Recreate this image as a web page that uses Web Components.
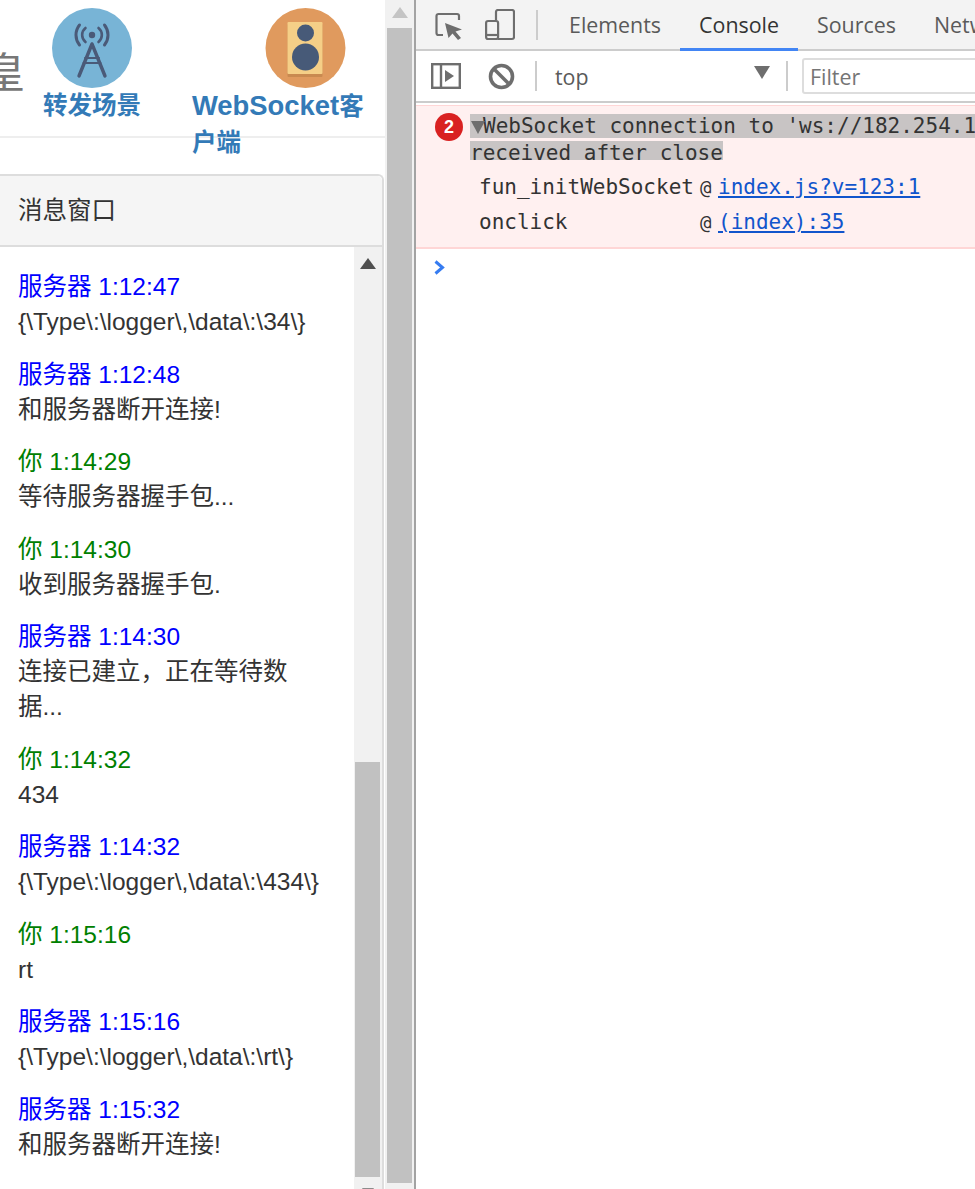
<!DOCTYPE html>
<html>
<head>
<meta charset="utf-8">
<title>WebSocket</title>
<style>
html,body{margin:0;height:1189px;overflow:hidden;background:#fff;}
body{font-family:"Liberation Sans","Noto Sans CJK SC",sans-serif;}
</style>
</head>
<body>
<app-root>
  <nav-bar slot="left">
    <nav-item label="转发场景" gap="9" width="98"><svg viewBox="0 0 80 80" width="80" height="80">
      <circle cx="40" cy="40" r="40" fill="#78b4d6"/>
      <g fill="none" stroke="#4a5a78" stroke-linecap="round">
        <g stroke-width="2.6"><path d="M33.5 20a9 9 0 0 0 0 14M46.500 20a9 9 0 0 1 0 14"/></g>
        <g stroke-width="3"><path d="M27.500 17a16 16 0 0 0 0 20M52.500 17a16 16 0 0 1 0 20"/></g>
        <path stroke-width="3.400" d="M40 36L27 68M40 36L53 68"/>
        <path stroke-width="2" d="M33 50H47M31.500 55H48.500"/>
      </g>
      <circle cx="40" cy="27" r="3.200" fill="#4a5a78"/>
    </svg></nav-item>
    <nav-item gap="73" width="178" strong="WebSocket" label="客户端"><svg viewBox="0 0 80 80" width="81" height="80">
      <circle cx="40" cy="40" r="40" fill="#e09a5e"/>
      <rect x="22" y="16" width="35" height="53" rx="1" fill="#c98a50"/>
      <rect x="22" y="14" width="35" height="52" rx="1" fill="#f5cf87"/>
      <circle cx="40" cy="25" r="8.500" fill="#475a78"/>
      <circle cx="40" cy="49" r="13.500" fill="#475a78"/>
    </svg></nav-item>
  </nav-bar>
  <msg-panel slot="left" heading="消息窗口">
    <chat-msg who="server" time="1:12:47">{\Type\:\logger\,\data\:\34\}</chat-msg>
    <chat-msg who="server" time="1:12:48">和服务器断开连接!</chat-msg>
    <chat-msg who="you" time="1:14:29">等待服务器握手包...</chat-msg>
    <chat-msg who="you" time="1:14:30">收到服务器握手包.</chat-msg>
    <chat-msg who="server" time="1:14:30">连接已建立，正在等待数据...</chat-msg>
    <chat-msg who="you" time="1:14:32">434</chat-msg>
    <chat-msg who="server" time="1:14:32">{\Type\:\logger\,\data\:\434\}</chat-msg>
    <chat-msg who="you" time="1:15:16">rt</chat-msg>
    <chat-msg who="server" time="1:15:16">{\Type\:\logger\,\data\:\rt\}</chat-msg>
    <chat-msg who="server" time="1:15:32">和服务器断开连接!</chat-msg>
  </msg-panel>
  <dev-tools slot="right"></dev-tools>
</app-root>

<script>
class AppRoot extends HTMLElement{
  constructor(){
    super();
    this.attachShadow({mode:'open'}).innerHTML=`
    <style>
      :host{display:flex;height:1189px;width:975px;overflow:hidden;}
      .left{width:385px;flex:none;display:flex;flex-direction:column;overflow:hidden;}
      .right{flex:1;min-width:0;border-left:2px solid #a3a3a3;}
    </style>
    <div class="left"><slot name="left"></slot></div>
    <scroll-bar top="28" bottom="1183" width="29" thumb="25" inset="2" arrow="#c4c4c4" arrowtop="7"></scroll-bar>
    <div class="right"><slot name="right"></slot></div>`;
  }
}
customElements.define('app-root',AppRoot);

class ScrollBar extends HTMLElement{
  connectedCallback(){
    const a=n=>this.getAttribute(n);
    const top=+a('top'),bottom=+a('bottom'),w=+a('width'),t=+a('thumb'),inset=+a('inset');
    const down=a('down');
    this.attachShadow({mode:'open'}).innerHTML=`
    <style>
      :host{display:block;flex:none;width:${w}px;background:#f1f1f1;position:relative;overflow:hidden;}
      .up{display:flex;justify-content:center;height:${top}px;padding-top:${a('arrowtop')}px;box-sizing:border-box;}
      .up i{width:0;height:0;border:8px solid transparent;border-top:0;border-bottom:11px solid ${a('arrow')};}
      .thumb{width:${t}px;height:${bottom-top}px;margin-left:${inset}px;background:#c1c1c1;}
      .down{position:absolute;left:${inset}px;width:${t}px;bottom:-9px;display:${down?'flex':'none'};justify-content:center;}
      .down i{width:0;height:0;border:6.500px solid transparent;border-bottom:0;border-top:10px solid #8c8c8c;}
    </style>
    <div class="up"><i></i></div>
    <div class="thumb"></div>
    <div class="down"><i></i></div>`;
  }
}
customElements.define('scroll-bar',ScrollBar);

class NavBar extends HTMLElement{
  constructor(){
    super();
    this.attachShadow({mode:'open'}).innerHTML=`
    <style>
      :host{display:block;flex:none;height:136px;border-bottom:2px solid #eee;}
      .row{display:flex;align-items:flex-start;height:136px;}
      .brand{flex:none;width:43px;margin-left:-17px;margin-right:17px;margin-top:49px;font-size:42px;line-height:50px;color:#777;white-space:nowrap;}
      ::slotted(nav-item:last-child){margin-left:51px;}
    </style>
    <div class="row"><span class="brand">皇</span><slot></slot></div>`;
  }
}
customElements.define('nav-bar',NavBar);

class NavItem extends HTMLElement{
  connectedCallback(){
    const a=n=>this.getAttribute(n);
    const strong=a('strong')?`<span class="en">${a('strong')}</span>`:'';
    this.attachShadow({mode:'open'}).innerHTML=`
    <style>
      :host{display:block;flex:none;width:${a('width')}px;padding-top:8px;}
      .pic{display:block;margin-left:${a('gap')}px;height:80px;filter:blur(.4px);}
      .txt{font-weight:bold;font-size:24.500px;line-height:36px;color:#337ab7;}
      .en{font-size:27.400px;}
    </style>
    <div class="pic"><slot></slot></div>
    <div class="txt">${strong}${a('label')}</div>`;
  }
}
customElements.define('nav-item',NavItem);

class MsgPanel extends HTMLElement{
  connectedCallback(){
    this.attachShadow({mode:'open'}).innerHTML=`
    <style>
      :host{display:flex;flex-direction:column;flex:1;min-height:0;margin:36px 1px 0 -10px;border:2px solid #ddd;border-bottom:0;border-radius:6px 6px 0 0;color:#333;}
      .head{flex:none;height:71px;box-sizing:border-box;padding-left:26px;background:#f5f5f5;border-bottom:2px solid #ddd;font-size:24.500px;line-height:69px;border-radius:5px 5px 0 0;}
      .body{flex:1;min-height:0;display:flex;}
      .list{flex:1;min-width:0;padding:22px 0 0 26px;overflow:hidden;}
    </style>
    <div class="head">${this.getAttribute('heading')}</div>
    <div class="body">
      <div class="list"><slot></slot></div>
      <scroll-bar top="515" bottom="930" width="28" thumb="25" inset="1" arrow="#505050" arrowtop="11" down="1"></scroll-bar>
    </div>`;
  }
}
customElements.define('msg-panel',MsgPanel);

class ChatMsg extends HTMLElement{
  connectedCallback(){
    const you=this.getAttribute('who')==='you';
    this.attachShadow({mode:'open'}).innerHTML=`
    <style>
      :host{display:block;width:285px;margin-bottom:17.500px;font-size:24.500px;line-height:35px;color:#333;}
      .who{color:${you?'#008000':'#0000ff'};}
    </style>
    <div class="who">${you?'你':'服务器'} ${this.getAttribute('time')}</div>
    <div><slot></slot></div>`;
  }
}
customElements.define('chat-msg',ChatMsg);

class DevTools extends HTMLElement{
  constructor(){
    super();
    this.attachShadow({mode:'open'}).innerHTML=`
    <style>
      :host{display:block;height:1189px;overflow:hidden;font-family:"Open Sans","Liberation Sans",sans-serif;background:#fff;}
      .bar{display:flex;align-items:center;white-space:nowrap;}
      svg{display:block;flex:none;}
      .tabs{height:49px;background:#f3f3f3;border-bottom:2px solid #ccc;}
      .sep{flex:none;width:2px;background:#ccc;}
      .tab{flex:none;padding:0 19px;height:51px;box-sizing:border-box;line-height:50px;font-size:21.400px;color:#5a5a5a;margin-bottom:-2px;}
      .tab.on{color:#333;border-bottom:3px solid #4285f4;}
      .tools{height:50px;border-bottom:2px solid #ccc;}
      .ctx{flex:none;width:231px;margin-left:18px;display:flex;align-items:center;justify-content:space-between;padding-right:16px;box-sizing:border-box;font-size:21.400px;color:#5a5a5a;}
      .ctx i{width:0;height:0;border:8px solid transparent;border-bottom:0;border-top:13px solid #6e6e6e;margin-top:-7px;}
      .filter{flex:none;width:200px;height:36px;margin-left:14px;box-sizing:border-box;border:2px solid #ddd;border-radius:3px;padding-left:6px;font-size:21.400px;line-height:33px;color:#757575;}
    </style>
    <div class="bar tabs">
      <svg width="30" height="30" viewBox="0 0 30 30" style="margin-left:17px" fill="none"><path d="M10 25H5.500a2 2 0 0 1-2-2V6a2 2 0 0 1 2-2H24a2 2 0 0 1 2 2V10" stroke="#6e6e6e" stroke-width="2.200"/><path d="M12 13L29 19.500L22.500 21.500L28 28L25 30L19.500 23.500L15.500 28Z" fill="#6e6e6e"/></svg>
      <svg width="30" height="32" viewBox="0 0 30 32" style="margin-left:22px" fill="none" stroke="#6e6e6e" stroke-width="2.200"><path d="M11 11V3a2 2 0 0 1 2-2H27a2 2 0 0 1 2 2V28a2 2 0 0 1-2 2H13"/><rect x="1.100" y="12" width="12" height="18" rx="2"/><path d="M1 26H13" /></svg>
      <span class="sep" style="height:30px;margin-left:21px"></span>
      <span class="tab" style="margin-left:12px">Elements</span>
      <span class="tab on">Console</span>
      <span class="tab">Sources</span>
      <span class="tab">Network</span>
    </div>
    <div class="bar tools">
      <svg width="30" height="26" viewBox="0 0 30 26" style="margin-left:15px" fill="none"><rect x="1.200" y="1.200" width="27.600" height="23.600" stroke="#6e6e6e" stroke-width="2.400"/><path d="M10 1V25" stroke="#6e6e6e" stroke-width="2.400"/><path d="M14 7L23 13L14 19Z" fill="#6e6e6e"/></svg>
      <svg width="27" height="27" viewBox="0 0 27 27" style="margin-left:27px" fill="none" stroke="#6e6e6e" stroke-width="3.600"><circle cx="13.500" cy="13.500" r="11"/><path d="M5.500 5.500L21.500 21.500"/></svg>
      <span class="sep" style="height:30px;margin-left:20px"></span>
      <div class="ctx"><span>top</span><i></i></div>
      <span class="sep" style="height:30px"></span>
      <div class="filter">Filter</div>
    </div>
    <console-error></console-error>
    <svg width="13" height="15" viewBox="0 0 13 15" style="margin:11px 0 0 17px" fill="none"><path d="M2.500 1.500L9.500 7.500L2.500 13.500" stroke="#367cf1" stroke-width="3"/></svg>`;
  }
}
customElements.define('dev-tools',DevTools);

class ConsoleError extends HTMLElement{
  constructor(){
    super();
    this.attachShadow({mode:'open'}).innerHTML=`
    <style>
      :host{display:block;margin-top:2px;height:144px;box-sizing:border-box;background:#fff0f0;border-top:1px solid #ffd6d6;border-bottom:2px solid #ffd6d6;font-family:"DejaVu Sans Mono","Liberation Mono",monospace;font-size:21px;color:#333;position:relative;}
      .main{padding:7px 0 0 54px;height:54px;box-sizing:border-box;line-height:27px;white-space:nowrap;overflow:hidden;}
      .badge{position:absolute;left:19px;top:7px;width:28px;height:28px;border-radius:50%;background:#d92121;color:#fff;font:bold 18px/28px "Liberation Sans",sans-serif;text-align:center;}
      .tri{position:absolute;left:55px;top:15px;width:0;height:0;border:7px solid transparent;border-bottom:0;border-top:13px solid #6e6e6e;}
      .sel{background:#c8c4c4;}
      .first{padding-left:13px;}
      .stack{display:grid;grid-template-columns:221px 18px auto;justify-content:start;margin:10px 0 0 63px;line-height:35px;white-space:nowrap;}
      a{color:#1155cc;text-decoration:underline;}
      .at{font-size:19px;}
    </style>
    <span class="badge">2</span>
    <span class="tri"></span>
    <div class="main"><span class="sel first">WebSocket connection to 'ws://182.254.197.171:8080/ws' failed: Connection</span><br><span class="sel">received after close</span></div>
    <div class="stack">
      <span>fun_initWebSocket</span><span class="at">@</span><a>index.js?v=123:1</a>
      <span>onclick</span><span class="at">@</span><a>(index):35</a>
    </div>`;
  }
}
customElements.define('console-error',ConsoleError);
</script>
</body>
</html>
